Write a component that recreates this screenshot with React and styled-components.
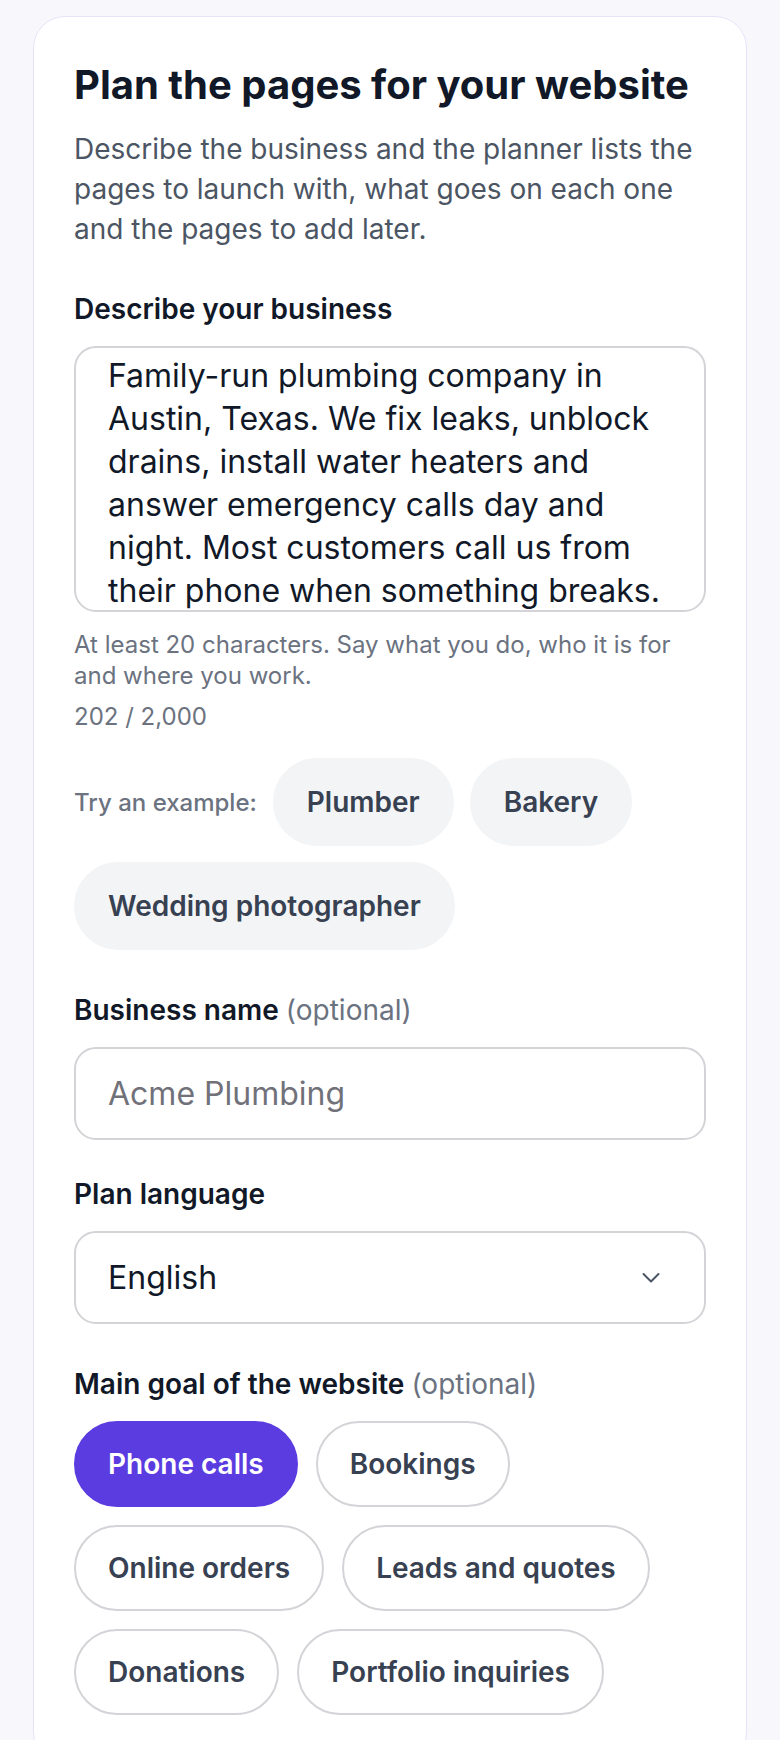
import React, { useState } from "react";
import styled, { createGlobalStyle } from "styled-components";

const GlobalStyle = createGlobalStyle`
  * {
    box-sizing: border-box;
  }

  body {
    margin: 0;
    background: #f7f7fc;
    font-family: Inter, "Noto Sans", "Liberation Sans", sans-serif;
    color: #111827;
  }
`;

const Page = styled.main`
  padding: 16px 33px 0;
`;

const Card = styled.section`
  background: #fff;
  border: 1px solid #e6e4f9;
  border-radius: 32px;
  padding: 44px 40px 48px;
`;

const Title = styled.h1`
  margin: 0;
  font-size: 40px;
  line-height: 48px;
  font-weight: 700;
  color: #111827;
`;

const Intro = styled.p`
  margin: 20px 0 0;
  font-size: 28px;
  line-height: 40px;
  color: #4b5563;
`;

const Field = styled.div`
  margin-top: ${(p) => p.$space || 42}px;
`;

const Label = styled.label`
  display: block;
  margin-bottom: 19px;
  font-size: 28px;
  line-height: 36px;
  font-weight: 600;
  color: #111827;
`;

const Optional = styled.span`
  font-weight: 400;
  color: #6b7280;
`;

const TextArea = styled.textarea`
  display: block;
  width: 100%;
  height: 266px;
  padding: 6px 32px 0;
  border: 2px solid #d4d4d8;
  border-radius: 22px;
  font-family: inherit;
  font-size: 32px;
  line-height: 43px;
  color: #111827;
  resize: none;
  overflow: hidden;
  outline: none;
`;

const Hint = styled.p`
  margin: ${(p) => p.$top}px 0 0;
  font-size: 24px;
  line-height: 31px;
  color: #6b7280;
`;

const ExampleRow = styled.div`
  display: flex;
  flex-wrap: wrap;
  align-items: center;
  gap: 16px;
  margin-top: 26px;
`;

const ExampleLabel = styled.span`
  font-size: 24px;
  font-weight: 500;
  color: #6b7280;
`;

const ExampleChip = styled.button`
  height: 88px;
  padding: 0 32px;
  border: 2px solid #f3f4f6;
  border-radius: 999px;
  background: #f3f4f6;
  font-family: inherit;
  font-size: 28px;
  font-weight: 600;
  color: #374151;
  cursor: pointer;
`;

const TextInput = styled.input`
  display: block;
  width: 100%;
  height: 93px;
  padding: 0 32px;
  border: 2px solid #d4d4d8;
  border-radius: 22px;
  background: #fff;
  font-family: inherit;
  font-size: 32px;
  color: #111827;
  outline: none;

  &::placeholder {
    color: #71717a;
  }
`;

const SelectWrap = styled.div`
  position: relative;
`;

const Select = styled.select`
  display: block;
  width: 100%;
  height: 93px;
  padding: 0 80px 0 32px;
  border: 2px solid #d4d4d8;
  border-radius: 22px;
  background: #fff;
  appearance: none;
  font-family: inherit;
  font-size: 32px;
  color: #111827;
  outline: none;
`;

const Chevron = styled.svg`
  position: absolute;
  right: 46px;
  top: 50%;
  transform: translateY(-50%);
  pointer-events: none;
`;

const GoalGroup = styled.div`
  display: flex;
  flex-wrap: wrap;
  gap: 18px;
`;

const GoalChip = styled.button`
  height: 86px;
  padding: 0 32px;
  border: 2px solid ${(p) => (p.$active ? "#5b3ce0" : "#d4d4d8")};
  border-radius: 999px;
  background: ${(p) => (p.$active ? "#5b3ce0" : "#fff")};
  font-family: inherit;
  font-size: 28px;
  font-weight: 600;
  color: ${(p) => (p.$active ? "#fff" : "#374151")};
  cursor: pointer;
`;

const description =
  "Family-run plumbing company in Austin, Texas. We fix leaks, unblock drains, install water heaters and answer emergency calls day and night. Most customers call us from their phone when something breaks.";

const examples = ["Plumber", "Bakery", "Wedding photographer"];

const goals = [
  "Phone calls",
  "Bookings",
  "Online orders",
  "Leads and quotes",
  "Donations",
  "Portfolio inquiries",
];

const App = () => {
  const [text, setText] = useState(description);
  const [goal, setGoal] = useState("Phone calls");

  return (
    <>
      <GlobalStyle />
      <Page>
        <Card>
          <Title>Plan the pages for your website</Title>
          <Intro>
            Describe the business and the planner lists the pages to launch
            with, what goes on each one and the pages to add later.
          </Intro>

          <Field>
            <Label htmlFor="business">Describe your business</Label>
            <TextArea
              id="business"
              value={text}
              onChange={(e) => setText(e.target.value)}
            />
            <Hint $top={17}>
              At least 20 characters. Say what you do, who it is for and where
              you work.
            </Hint>
            <Hint $top={10}>{text.length.toLocaleString("en-US")} / 2,000</Hint>
          </Field>

          <ExampleRow>
            <ExampleLabel>Try an example:</ExampleLabel>
            {examples.map((item) => (
              <ExampleChip key={item} type="button">
                {item}
              </ExampleChip>
            ))}
          </ExampleRow>

          <Field>
            <Label htmlFor="name">
              Business name <Optional>(optional)</Optional>
            </Label>
            <TextInput id="name" placeholder="Acme Plumbing" />
          </Field>

          <Field $space={36}>
            <Label htmlFor="language">Plan language</Label>
            <SelectWrap>
              <Select id="language" defaultValue="en">
                <option value="en">English</option>
                <option value="es">Español</option>
                <option value="fr">Français</option>
              </Select>
              <Chevron width="18" height="11" viewBox="0 0 18 11" fill="none">
                <path
                  d="M1.5 1.5 9 9l7.5-7.5"
                  stroke="#4b5563"
                  strokeWidth="2"
                  strokeLinecap="round"
                  strokeLinejoin="round"
                />
              </Chevron>
            </SelectWrap>
          </Field>

          <Field>
            <Label as="div">
              Main goal of the website <Optional>(optional)</Optional>
            </Label>
            <GoalGroup role="group">
              {goals.map((item) => (
                <GoalChip
                  key={item}
                  type="button"
                  $active={goal === item}
                  onClick={() => setGoal(item)}
                >
                  {item}
                </GoalChip>
              ))}
            </GoalGroup>
          </Field>
        </Card>
      </Page>
    </>
  );
};

export default App;
